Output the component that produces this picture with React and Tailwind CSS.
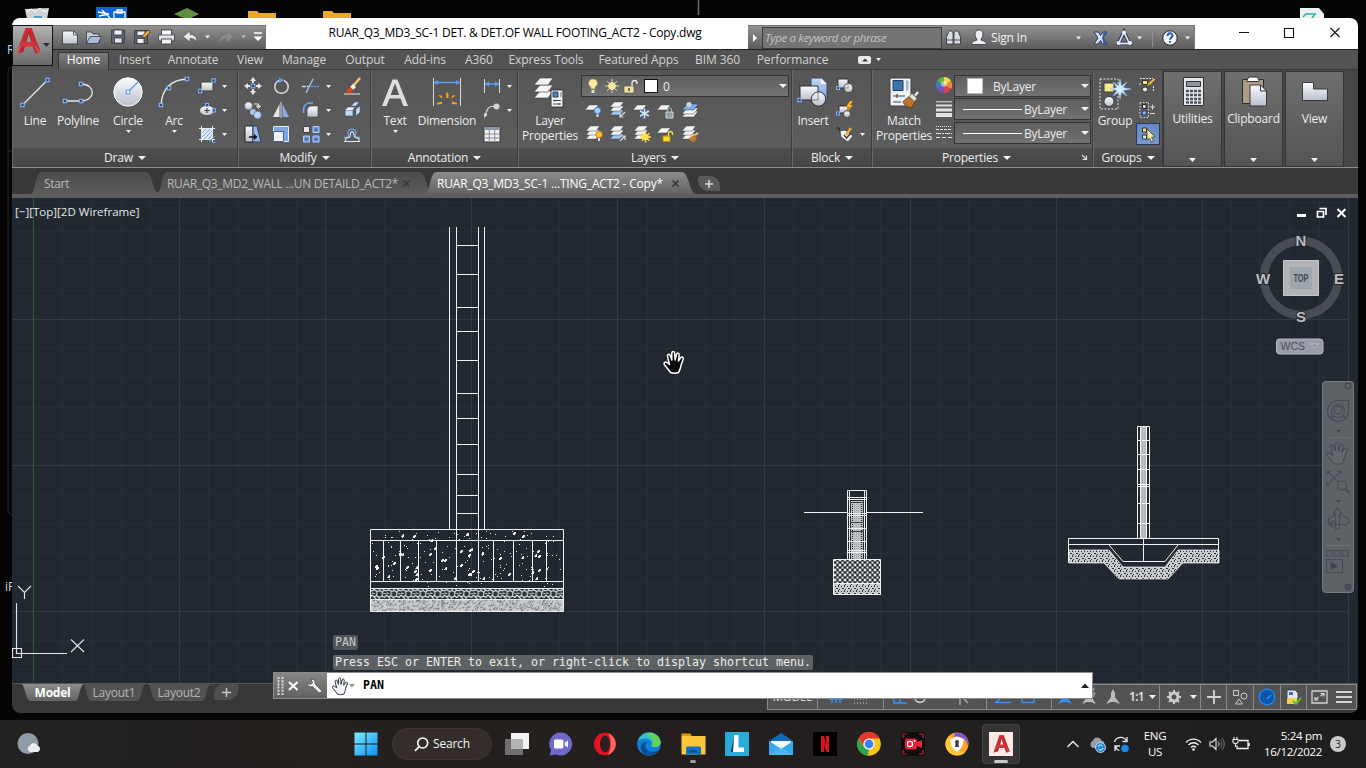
import React from "react";

const UI = "font-['Open_Sans','Noto_Sans',sans-serif]";

/* ---------- drawing helpers ---------- */
const Svg = ({ w = 18, h = w, vb, className = "", children }) => (
  <svg width={w} height={h} viewBox={vb || `0 0 ${w} ${h}`} className={"block shrink-0 " + className} fill="none">
    {children}
  </svg>
);
const Grip = ({ x, y, s = 3.4 }) => (
  <rect x={x - s / 2} y={y - s / 2} width={s} height={s} fill="#3c4454" stroke="#7fb4ff" strokeWidth="1.1" />
);
const Caret = ({ w = 5, className = "" }) => (
  <svg width={w} height={Math.ceil(w / 2)} viewBox="0 0 10 5" preserveAspectRatio="none" className={"block shrink-0 " + className}>
    <path d="M0 0h10L5 5z" fill="#f2f2f2" />
  </svg>
);
const Defs = () => (
  <svg width="0" height="0" className="absolute">
    <defs>
      <linearGradient id="metal" x1="0" y1="0" x2="0" y2="1">
        <stop offset="0" stopColor="#fbfbfd" />
        <stop offset="1" stopColor="#b9bfcb" />
      </linearGradient>
      <linearGradient id="sky" x1="0" y1="0" x2="0" y2="1">
        <stop offset="0" stopColor="#c3d9f2" />
        <stop offset="1" stopColor="#6d9bd8" />
      </linearGradient>
      <linearGradient id="red" x1="0" y1="0" x2="1" y2="1">
        <stop offset="0" stopColor="#e5434a" />
        <stop offset="1" stopColor="#98161f" />
      </linearGradient>
      <linearGradient id="tabOn" x1="0" y1="0" x2="0" y2="1">
        <stop offset="0" stopColor="#8d8d8d" />
        <stop offset="1" stopColor="#626262" />
      </linearGradient>
      <linearGradient id="tabOff" x1="0" y1="0" x2="0" y2="1">
        <stop offset="0" stopColor="#4a4a4a" />
        <stop offset="1" stopColor="#5c5c5c" />
      </linearGradient>
      <linearGradient id="win" gradientUnits="userSpaceOnUse" x1="0" y1="0" x2="24" y2="24">
        <stop offset="0" stopColor="#7df0ff" />
        <stop offset="1" stopColor="#0a8cf5" />
      </linearGradient>
    </defs>
  </svg>
);

/* ---------- large icons ---------- */
const LineBig = () => (
  <Svg w={32}><path d="M3.5 29L28.5 4" stroke="#e6e6e6" strokeWidth="1.3" /><Grip x={3.5} y={29} /><Grip x={28.5} y={4} /></Svg>
);
const PolyBig = () => (
  <Svg w={32}><path d="M3 25H19C34 25 34 8 19 8" stroke="#e6e6e6" strokeWidth="1.3" /><Grip x={3} y={25} /><Grip x={19} y={25} /><Grip x={19} y={8} /></Svg>
);
const CircleBig = () => (
  <Svg w={32}><circle cx="16" cy="16" r="14.2" fill="url(#metal)" stroke="#fff" /><path d="M16 16L26 6" stroke="#5b94e6" strokeWidth="1.2" />
    <rect x="14.2" y="14.2" width="3.6" height="3.6" fill="#fff" stroke="#5b94e6" /></Svg>
);
const ArcBig = () => (
  <Svg w={32}><path d="M3 29C4 14 12 4 29 3" stroke="#e6e6e6" strokeWidth="1.3" /><Grip x={3} y={29} /><Grip x={11} y={12} /><Grip x={29} y={3} /></Svg>
);
const TextBig = () => (
  <Svg w={32}><path d="M3 30L13.6 3.5h4.8L29 30h-4.6l-2.9-7.6H10.4L7.5 30zM11.7 19h8.5L16 7.2z" fill="#dedede" fillRule="evenodd" /></Svg>
);
const DimBig = () => (
  <Svg w={32}><path d="M2.5 2v28M29.500 2v28" stroke="#d8d8d8" /><path d="M3 6.500h26" stroke="#5b9cf5" strokeWidth="1.4" />
    <path d="M3 6.500l4-2.500v5zM29 6.500l-4-2.500v5z" fill="#5b9cf5" />
    <g fill="#f5a21c"><path d="M15 18l1-2 1.500 2v4h-2zM9 21l-1.500-2 3 .5 1.500 3zM23 21l1.500-2-3 .5-1.500 3zM6 27l5-1.500v2.500l-5 .5zM26 27l-5-1.500v2.500l5 .5z" /></g></Svg>
);
const Sheet = ({ x = 0, y = 0, s = 1, f = "#f4f4f6" }) => (
  <path transform={`translate(${x} ${y}) scale(${s})`} d="M6 0h13l-5 7H0z" fill={f} stroke="#3c3c3c" strokeWidth=".6" />
);
const LayerBig = () => (
  <Svg w={34} h={34}><Sheet x={1} y={15} /><Sheet x={1} y={9} /><Sheet x={1} y={2} />
    <path d="M18 14h12v17H18z" fill="#f2f4f7" stroke="#3c3c3c" /><path d="M20 16h5v5h-5z" fill="#4f82c2" stroke="#28415f" /><path d="M27 16h2v5h-2z" fill="#a9b2bf" /><path d="M20 24.500h8M20 28h8M22 23.500v2M26 27v2" stroke="#444b55" /></Svg>
);
const InsertBig = () => (
  <Svg w={34} h={32}><path d="M15 2h10l6 6v18H15z" fill="url(#sky)" stroke="#3e4450" /><path d="M25 2l6 6h-6z" fill="#fff" />
    <path d="M4 10h18v14H4z" fill="url(#metal)" stroke="#2e3138" /><circle cx="22.500" cy="23" r="7.200" fill="url(#metal)" stroke="#2e3138" /><path d="M22 16v8h-6.500" stroke="#666" strokeWidth=".8" /><Grip x={3.500} y={24} /></Svg>
);
const Brush = ({ t }) => (
  <g transform={t}><path d="M0 8l6-5 6 5-3 6c-4 0-8-2-9-6z" fill="#b8742a" stroke="#5c3208" strokeWidth=".7" /><path d="M6 3l3-3 5 5-2.500 3z" fill="#e8e2d8" stroke="#5c5040" strokeWidth=".6" /><path d="M12 2l3-3.500" stroke="#eceff2" strokeWidth="2.400" /></g>
);
const MatchBig = () => (
  <Svg w={34} h={32}><path d="M3 2h21v28H3z" fill="#eff1f5" stroke="#3b3f47" /><path d="M6 4.500h10v10H6z" fill="#3c74ad" stroke="#1d3c60" /><path d="M19 4.500h2.500v10H19z" fill="#a9b2bf" /><path d="M6 20h12M10 18v4M6 26h8" stroke="#454c57" strokeWidth="1.200" /><Brush t="translate(16 17.500)" /></Svg>
);
const GroupBig = () => (
  <Svg w={34} h={34}><path d="M2 3h18v30H2z" stroke="#e8e8e8" strokeDasharray="2 1.500" /><path d="M6 7h10v9H6z" fill="#f5e98b" stroke="#3a3a3a" /><circle cx="11" cy="25.500" r="5" fill="url(#metal)" stroke="#3a3a3a" />
    <path d="M22 3l1.400 7 5.600-4-4 5.500 8 1.500-8 1.500 4 5.500-5.600-4-1.400 7-1.400-7-5.600 4 4-5.500-7-1.500 7-1.500-4-5.500 5.600 4z" fill="#d8edff" stroke="#8cc0f4" strokeWidth=".6" /></Svg>
);
const CalcBig = () => (
  <Svg w={32}><path d="M6.500 2.500h20v28h-20z" fill="#e4e6ea" stroke="#2e3138" /><path d="M9.500 6.500h14v5h-14z" fill="#8f959d" stroke="#30343a" />
    {[15, 19, 23, 26.500].map((y) => <path key={y} d={`M9 ${y + 1}h15`} stroke="#4e545e" strokeWidth="2.400" strokeDasharray="3 1" />)}</Svg>
);
const ClipBig = () => (
  <Svg w={32}><path d="M4.500 4.500h21v24h-21z" fill="#ae9c8a" stroke="#2e2c29" /><path d="M9 5l2-3h8l2 3v1.500H9z" fill="#fff" stroke="#333" /><path d="M12 10h10.500l6 6v15H12z" fill="url(#metal)" stroke="#34363b" /><path d="M22.500 10v6h6z" fill="#fff" stroke="#34363b" /></Svg>
);
const ViewBig = () => (
  <Svg w={32}><path d="M3.500 7.500h11v6.500h14v11.500h-25z" fill="url(#metal)" stroke="#3a3a3a" /></Svg>
);

/* ---------- small 18px icons ---------- */
const I = {
  rect: () => <Svg><path d="M3 5h12v9H3z" fill="url(#metal)" stroke="#3a3a3a" /><Grip x={2} y={14} /><Grip x={15.500} y={3.500} /></Svg>,
  ellipse: () => <Svg><ellipse cx="9" cy="9.500" rx="7.500" ry="5.200" fill="url(#metal)" stroke="#4a4a4a" /><path d="M6.500 9.500h5M9 7v5" stroke="#333" /><Grip x={9} y={4} s={3} /><Grip x={16} y={9.500} s={3} /></Svg>,
  hatch: () => <Svg><path d="M4 4h10v10H4z" fill="#dce8fa" /><path d="M4 12l8-8M4 8l4-4M6 14l8-8M10 14l4-4" stroke="#7d9fd8" strokeWidth=".9" /><path d="M1 3.500h16M1 14.500h16M3.500 1v16M14.500 1v16" stroke="#e6e6e6" /><path d="M11 17l6-6M14 17.500h4" stroke="#5b9cf5" /></Svg>,
  move: () => <Svg><path d="M9 0l3 4H6zM9 18l3-4H6zM0 9l4-3v6zM18 9l-4-3v6z" fill="#e4e4e8" /><path d="M9 3v3M9 12v3M3 9h3M12 9h3" stroke="#e4e4e8" strokeWidth="2" /><Grip x={9} y={9} s={3.600} /></Svg>,
  rotate: () => <Svg><path d="M12 3.500a6.700 6.700 0 1 1-5 0" stroke="#d4d4d4" strokeWidth="1.700" /><path d="M7 .5l5.500 2.700L7 6z" fill="#5b9cf5" /></Svg>,
  trim: () => <Svg><path d="M0 9.500h7" stroke="#d8d8d8" strokeWidth="1.400" strokeDasharray="4 1" /><path d="M9 9.500h9" stroke="#5b9cf5" strokeWidth="1.400" strokeDasharray="2 1" /><path d="M4 16L11 2" stroke="#9cc4ff" strokeWidth="1.400" /></Svg>,
  erase: () => <Svg><path d="M1 17h16" stroke="#eee" /><path d="M17 1L10 9" stroke="#f3c76a" strokeWidth="2.600" /><path d="M10 7l3 3-3 3-3-3z" fill="#efefef" /><path d="M7 9.500l3.500 3.500-3 3c-2 1-4 0-4-2z" fill="#d2491f" /></Svg>,
  copy: () => <Svg><circle cx="4.500" cy="5" r="4" fill="url(#metal)" stroke="#444" strokeWidth=".5" /><circle cx="9" cy="11" r="3" fill="#a9c4e9" /><circle cx="13.500" cy="14" r="3.800" fill="#b8d2f2" stroke="#4a6da8" strokeWidth=".6" /><path d="M10 3h4.500v3M12.500 5h4l-2 2.500z" stroke="#eee" strokeWidth="1" /></Svg>,
  mirror: () => <Svg><path d="M7.500 3v13H1z" fill="#e6e6ea" /><path d="M10.500 3v13H17z" fill="#83aee6" /><path d="M9 1v16" stroke="#ddd" /></Svg>,
  fillet: () => <Svg><path d="M5 16V10c0-3 2-5 5-5h6v11z" fill="url(#metal)" stroke="#3a3a3a" strokeWidth=".6" /><path d="M1.500 12V9C1.500 4.500 4.500 2 8 2h3" stroke="#69a6fa" strokeWidth="1.600" /></Svg>,
  explode: () => <Svg><path d="M2 9h8v6H2z" fill="#c2d6f0" stroke="#3a5482" strokeWidth=".7" /><path d="M2 9l3-3h7l-2 3" fill="#e8eff8" stroke="#4a628c" strokeWidth=".6" /><path d="M8 5l4-4h4l-3 4zM13 8l4-3v6l-4 4z" fill="#cfdff4" stroke="#4a628c" strokeWidth=".6" /></Svg>,
  stretch: () => <Svg><path d="M1 1h8v16H1z" fill="url(#metal)" stroke="#222" /><path d="M9 1h4l4 16H9z" fill="#8fb7e8" stroke="#2c436c" /><path d="M5 12h6" stroke="#111" strokeWidth="1.600" /><path d="M10 9l3.500 3L10 15z" fill="#111" /></Svg>,
  scale: () => <Svg><path d="M1.500 1.500h15v15h-15z" fill="#7da6e0" stroke="#dce9fb" /><path d="M1.500 6.500h10v10h-10z" fill="#eef2f8" stroke="#4a6288" /></Svg>,
  array: () => <Svg><path d="M1.500 1.500h6v6h-6z" fill="#e8e8e8" stroke="#444" /><path d="M11 1.500h6v6h-6zM1.500 11h6v6h-6zM11 11h6v6h-6z" fill="#6e9ce0" stroke="#a8cbff" /><path d="M12.500 3.500h3v2.500h-3zM3 13h3v2.500H3zM12.500 13h3v2.500h-3z" fill="#4a6ca8" /></Svg>,
  offset: () => <Svg><path d="M1 12.500h3c1.500 0 2-1.500 1.500-2.500a4 4 0 1 1 7 0c-.5 1 0 2.500 1.500 2.500h3" stroke="#6ea6f7" strokeWidth="1.300" /><path d="M1 16.500h16M3 16c-1.500-2 0-3.500 3-3.500 2-1 1-3 1.500-4.500.8-1.500 2.500-1.500 3.200 0 .5 1.500-.5 3.500 2 4.500 3 .5 4 1.500 3 3.500" stroke="#e4e4e4" strokeWidth="1.100" /></Svg>,
  dimlin: () => <Svg><path d="M1.500 2v14M16.500 2v14" stroke="#ddd" /><path d="M2 7h14" stroke="#5b9cf5" strokeWidth="1.300" /><path d="M2 7l4-2.800v5.600zM16 7l-4-2.800v5.600z" fill="#5b9cf5" /></Svg>,
  leader: () => <Svg><path d="M2 15C4 9 5 6 8 5.500h3" stroke="#ddd" strokeWidth="1.200" /><path d="M1 17l.5-5 3 1.500z" fill="#eee" /><circle cx="13.500" cy="5.500" r="3" fill="#cfd3da" /></Svg>,
  table: () => <Svg><path d="M1 2h16v15H1z" fill="#f0f0f2" stroke="#3d3d3d" /><path d="M1 2h16v3H1z" fill="#8b95a8" /><path d="M1 9h16M1 13h16M6.300 5v12M11.700 5v12" stroke="#8c8c92" /></Svg>,
};
const MiniSheets = ({ n = 3, f }) => <>{[...Array(n)].map((_, i) => <Sheet key={i} x={1} y={(n - 1 - i) * 4 + 1} s={0.72} f={i === 0 && f ? f : "#f4f4f6"} />)}</>;
const LIcons = [
  () => <Svg><Sheet x={0} y={4} s={0.7} /><circle cx="12.500" cy="9.500" r="3.200" fill="#a9d0fb" stroke="#4a7fc4" /><path d="M12.500 13v3" stroke="#ddd" strokeWidth="2" /></Svg>,
  () => <Svg><MiniSheets f="#9fc4f0" /><path d="M16 11l-5 5M11 12.500V16h3.500" stroke="#ddd" strokeWidth="1.200" /></Svg>,
  () => <Svg><Sheet x={0} y={4} s={0.7} /><path d="M11.500 7.500v10M7 10l9 5M7 15l9-5" stroke="#3d62a0" strokeWidth="3" /><path d="M11.500 7.500v10M7 10l9 5M7 15l9-5" stroke="#d4e6fb" strokeWidth="1.600" /></Svg>,
  () => <Svg><Sheet x={0} y={4} s={0.7} /><path d="M9 11h7v6H9z" fill="#8aa0a0" stroke="#c9d6d6" /><path d="M10.500 11V9a2 2 0 0 1 4 0v2" stroke="#9ab0b0" strokeWidth="1.200" /></Svg>,
  () => <Svg><Sheet x={1} y={10} s={0.85} /><Sheet x={1} y={7} s={0.85} /><Sheet x={1} y={3} s={0.85} f="#7eaeea" /><circle cx="8" cy="3.500" r="2.500" fill="#cdd3dc" /></Svg>,
  () => <Svg><MiniSheets /><circle cx="14" cy="9.500" r="3.200" fill="#ffc23d" stroke="#e07a10" /><path d="M14 13v3" stroke="#ddd" strokeWidth="2" /></Svg>,
  () => <Svg><MiniSheets f="#9fc4f0" /><path d="M11 16l5-5M12 11h4v4" stroke="#ddd" strokeWidth="1.200" /></Svg>,
  () => <Svg><MiniSheets /><path d="M12.500 6.500v11M7 12h11M8.700 8.200l7.600 7.600M16.300 8.200l-7.600 7.600" stroke="#ffe14a" strokeWidth="1.300" /><circle cx="12.500" cy="12" r="3.200" fill="#ffe04a" /></Svg>,
  () => <Svg><Sheet x={0} y={3} s={0.7} /><path d="M6 11h7v5.500H6z" fill="#ffd93a" stroke="#b48a10" /><path d="M11.500 11V8.500a2 2 0 0 1 4 0V10" stroke="#ffd93a" strokeWidth="1.300" /></Svg>,
  () => <Svg><MiniSheets /><path d="M8 13l5-3 3 3-3 4c-2 0-4-1-5-4z" fill="#c7792c" /><path d="M14 10l3-2" stroke="#eed9b8" strokeWidth="1.600" /></Svg>,
];
const BIcons = [
  () => <Svg><path d="M2 2h10v9H2z" fill="url(#metal)" stroke="#333" /><circle cx="12.500" cy="11" r="4.500" fill="url(#metal)" stroke="#444" /><path d="M12 6v5H8" stroke="#888" strokeWidth=".8" /><Grip x={2} y={11} s={3} /></Svg>,
  () => <Svg><path d="M3 5h9v7H3z" fill="url(#metal)" stroke="#333" /><circle cx="11" cy="13" r="3.500" fill="url(#metal)" stroke="#444" /><Grip x={2} y={12.500} s={3} /><path d="M14 0l-4 6h3l-2 5 6-7h-3l3-4z" fill="#ffc72e" stroke="#c36d08" strokeWidth=".5" /></Svg>,
  () => <Svg><path d="M0 3h3l1 3" stroke="#222" /><path d="M4 6l5-1 8 6-5 6-7-5z" fill="#f4f4f6" stroke="#333" strokeWidth=".7" /><path d="M8 10l2.500 3L15 8" stroke="#333" strokeWidth="1.300" /><path d="M10 10l5-7" stroke="#f0a52c" strokeWidth="2.400" /></Svg>,
];
const ColorWheel = () => (
  <Svg w={16}><path d="M8 8L8 0A8 8 0 0 1 15 4z" fill="#f3d84e" /><path d="M8 8L15 4A8 8 0 0 1 15 12z" fill="#ef8a3a" /><path d="M8 8L15 12A8 8 0 0 1 8 16z" fill="#d8434f" /><path d="M8 8V16A8 8 0 0 1 1 12z" fill="#7b4fb8" /><path d="M8 8L1 12A8 8 0 0 1 1 4z" fill="#3f78cc" /><path d="M8 8L1 4A8 8 0 0 1 8 0z" fill="#5fae4c" /><circle cx="8" cy="7" r="3" fill="#fff" opacity=".45" /></Svg>
);
const LwIcon = () => <Svg w={16}><path d="M0 .8h16" stroke="#e2e2e2" /><path d="M0 4.500h16" stroke="#e2e2e2" strokeWidth="2" /><path d="M0 9h16" stroke="#e2e2e2" strokeWidth="3" /><path d="M0 14h16" stroke="#e2e2e2" strokeWidth="4" /></Svg>;
const LtIcon = () => <Svg w={16}><path d="M0 1.500h16" stroke="#e2e2e2" strokeDasharray="1 1" /><path d="M0 4.500h16" stroke="#e2e2e2" strokeDasharray="3 1" /><path d="M0 8.500h16" stroke="#e2e2e2" strokeDasharray="5 1 2 1" /><path d="M0 12.500h16" stroke="#e2e2e2" strokeDasharray="4 2" /></Svg>;
const GIcons = [
  () => <Svg><path d="M1 1.500h13M1 6v2M14.500 9v5" stroke="#ddd" strokeDasharray="2 1" /><path d="M3.500 3.500h5v4h-5z" fill="#f5e98b" stroke="#333" /><circle cx="6" cy="12.500" r="2.600" fill="#e8e8ec" stroke="#333" /><path d="M8 9l1-2.500L15 1l1.500 1.500L11 8z" fill="#f2c14a" stroke="#6e4a10" strokeWidth=".6" /></Svg>,
  () => <Svg><path d="M1 1.500h8.500v15H1z" stroke="#ddd" strokeDasharray="1.500 1.500" /><path d="M3.500 3.500h3.500v4H3.500z" fill="#dfe2e6" stroke="#222" /><circle cx="5.300" cy="12" r="2" fill="#8fc0ff" stroke="#2a4c88" /><path d="M11 6h5M13.500 3.500v5M11 12.500h5" stroke="#ddd" /></Svg>,
  () => <Svg><path d="M1 1.500h8.500v15H1z" stroke="#4f9bff" strokeDasharray="1.500 1.500" /><path d="M3.500 3h4v4h-4z" fill="#f2e78a" stroke="#333" /><path d="M3.500 10h4v4h-4z" fill="#dfe6f0" stroke="#333" /><path d="M8 4v11l2.500-2 2 4 2-1-2-4h3.500z" fill="#f8efa2" stroke="#333" strokeWidth=".7" /></Svg>,
];

/* ---------- ribbon ---------- */
const LBL = "text-[12px] leading-[15px] text-[#ededed] whitespace-nowrap text-center tracking-[-0.2px]";
const Big = ({ w, icon, label, arrow, two }) => (
  <div className={"flex shrink-0 flex-col items-center pt-[6px] " + w}>
    <div className="flex h-8 items-start justify-center">{icon}</div>
    <div className={LBL + " mt-[5px]"}>{label}{two && <><br />{two}</>}</div>
    {arrow && <Caret className="mt-[2px]" />}
  </div>
);
const Small = ({ icon: Ico, arrow, w = "w-[18px]" }) => (
  <div className="flex h-6 items-center">
    <div className={"flex justify-center " + w}><Ico /></div>
    {arrow && <Caret className="ml-[6px]" />}
  </div>
);
const Panel = ({ w, title, children, corner, shift = "" }) => (
  <section className={"flex shrink-0 flex-col border-r border-[#3e3e3e] bg-gradient-to-b from-[#565656] to-[#5e5e5e] " + w}>
    <div className="flex h-[78px] border-l border-[#686868]">{children}</div>
    <div className={"relative flex h-[19px] items-center justify-center gap-[5px] border-l border-[#686868] bg-gradient-to-b from-[#4f4f4f] to-[#454545] " + shift}>
      <span className={LBL}>{title}</span>
      <Caret w={8} />
      {corner && <Svg w={7} className="absolute right-1"><path d="M1 1l4 4M5.500 1.500v4h-4" stroke="#ddd" strokeWidth="1.200" /></Svg>}
    </div>
  </section>
);
const Combo = ({ children, className = "" }) => (
  <div className={"flex h-[22px] items-center border border-[#333] bg-gradient-to-b from-[#5f5f5f] to-[#727272] " + className}>
    {children}
    <Caret w={8} className="ml-auto mr-px" />
  </div>
);
const Collapsed = ({ icon, label }) => (
  <div className="mr-[2px] flex w-[59px] shrink-0 flex-col items-center border border-[#353535] bg-gradient-to-b from-[#6f6f6f] to-[#545454] pt-[3px]">
    {icon}
    <div className={LBL + " mt-[4px]"}>{label}</div>
    <Caret w={7} className="mt-auto mb-[4px]" />
  </div>
);
const Ribbon = () => (
  <div className="flex h-[98px] border-b border-[#8e8e8e] bg-[#474747]">
    <Panel w="w-[226px]" title="Draw">
      <Big w="w-[44px]" icon={<LineBig />} label="Line" />
      <Big w="w-[42px]" icon={<PolyBig />} label="Polyline" />
      <Big w="w-[58px]" icon={<CircleBig />} label="Circle" arrow />
      <Big w="w-[34px]" icon={<ArcBig />} label="Arc" arrow />
      <div className="ml-[7px] flex flex-col pt-1"><Small icon={I.rect} arrow /><Small icon={I.ellipse} arrow /><Small icon={I.hatch} arrow /></div>
    </Panel>
    <Panel w="w-[133px]" title="Modify">
      <div className="ml-[5px] flex flex-col pt-1"><Small icon={I.move} /><Small icon={I.copy} /><Small icon={I.stretch} /></div>
      <div className="ml-[10px] flex flex-col pt-1"><Small icon={I.rotate} /><Small icon={I.mirror} /><Small icon={I.scale} /></div>
      <div className="ml-[12px] flex flex-col pt-1"><Small icon={I.trim} arrow /><Small icon={I.fillet} arrow /><Small icon={I.array} arrow /></div>
      <div className="ml-[12px] flex flex-col pt-1"><Small icon={I.erase} /><Small icon={I.explode} /><Small icon={I.offset} /></div>
    </Panel>
    <Panel w="w-[147px]" title="Annotation">
      <Big w="w-[46px]" icon={<TextBig />} label="Text" arrow />
      <Big w="w-[58px]" icon={<DimBig />} label="Dimension" />
      <div className="ml-[7px] flex flex-col pt-1"><Small icon={I.dimlin} arrow /><Small icon={I.leader} arrow /><Small icon={I.table} /></div>
    </Panel>
    <Panel w="w-[274px]" title="Layers">
      <Big w="w-[62px]" icon={<LayerBig />} label="Layer" two="Properties" />
      <div className="flex flex-col pt-[5px]">
        <Combo className="w-[208px]">
          <Svg w={56} h={18} className="ml-[4px]">
            <path d="M7 2c3 0 4.500 2 4.500 4.500S9 9 9 12H5c0-3-2.500-3-2.500-5.500S4 2 7 2z" fill="#f9e8a6" stroke="#9c8434" strokeWidth=".6" /><path d="M5.500 13h3v3h-3z" fill="#ddd" />
            <path d="M26 2v14M19 9h14M21 4l10 10M31 4L21 14" stroke="#e6d9a0" /><circle cx="26" cy="9" r="3.800" fill="#f9e8a6" />
            <path d="M38 9h10v7H38z" fill="#f3e2a0" stroke="#554" strokeWidth=".7" /><path d="M43 11v3" stroke="#333" strokeWidth="1.300" /><path d="M46 9V6a2.500 2.500 0 0 1 5 0v1" stroke="#eee" strokeWidth="1.400" />
          </Svg>
          <div className="ml-[2px] h-[14px] w-[14px] border border-[#111] bg-white" />
          <span className={LBL + " ml-[5px]"}>0</span>
        </Combo>
        <div className="ml-[4px] mt-[4px] grid grid-cols-[repeat(5,24px)] gap-y-[6px]">
          {LIcons.map((L, i) => <L key={i} />)}
        </div>
      </div>
    </Panel>
    <Panel w="w-[80px]" title="Block">
      <Big w="w-[40px]" icon={<InsertBig />} label="Insert" />
      <div className="ml-[3px] flex flex-col pt-1"><Small icon={BIcons[0]} /><Small icon={BIcons[1]} /><Small icon={BIcons[2]} arrow /></div>
    </Panel>
    <Panel w="w-[221px]" title="Properties" corner shift="pr-3">
      <Big w="w-[62px]" icon={<MatchBig />} label="Match" two="Properties" />
      <div className="ml-px flex w-4 flex-col gap-[8px] pt-[7px]"><ColorWheel /><LwIcon /><LtIcon /></div>
      <div className="ml-[2px] flex flex-col pt-[5px]">
        <Combo className="w-[137px]"><div className="ml-[12px] h-4 w-4 border border-[#bbb] bg-white" /><span className={LBL + " ml-[10px]"}>ByLayer</span></Combo>
        <Combo className="mt-px w-[137px]"><div className="ml-[8px] h-px w-[59px] bg-white" /><span className={LBL + " ml-[2px]"}>ByLayer</span></Combo>
        <Combo className="mt-[2px] w-[137px]"><div className="ml-[8px] h-px w-[59px] bg-white" /><span className={LBL + " ml-[2px]"}>ByLayer</span></Combo>
      </div>
    </Panel>
    <Panel w="w-[70px]" title="Groups">
      <Big w="w-[42px]" icon={<GroupBig />} label="Group" />
      <div className="flex flex-col pt-1">
        <Small icon={GIcons[0]} w="w-6" /><Small icon={GIcons[1]} w="w-6" />
        <div className="mt-px flex h-[22px] w-6 items-center justify-center border border-[#28395a] bg-gradient-to-b from-[#6586c0] to-[#7d98c8]">{GIcons[2]()}</div>
      </div>
    </Panel>
    <div className="flex pt-px">
      <Collapsed icon={<CalcBig />} label="Utilities" />
      <Collapsed icon={<ClipBig />} label="Clipboard" />
      <Collapsed icon={<ViewBig />} label="View" />
    </div>
  </div>
);

/* ---------- title bar ---------- */
const RedA = ({ w, h }) => (
  <svg width={w} height={h} viewBox="0 0 24 27" className="block" fill="none">
    <path d="M9 1h6l8.500 23-5 1.500L12 6z" fill="#a51c26" /><path d="M9 1l4.500 2L7 24l-6.500 1.500z" fill="url(#red)" /><path d="M3.500 19l2-4.500 13-.5 2 5z" fill="#d4373f" /><path d="M11 1h4l8.500 23-4.500 1.500z" fill="#cf3038" opacity=".75" />
    <path d="M.8 25.500l3.700-7.500M22.500 24.500l-4-6" stroke="#e98a8e" opacity=".7" />
  </svg>
);
const TitleBar = () => (
  <header className="relative flex h-[31px] bg-white">
    <div className="mt-[7px] flex h-6 w-[254px] items-center border-t border-r border-[#777] bg-gradient-to-b from-[#919191] to-[#5c5c5c] pl-[50px]">
      <Svg w={204} h={20} className="-mt-[2px]">
        <g stroke="#33363c" strokeWidth=".8">
          <path d="M0.500 4h11l4 4v9h-15z" fill="url(#metal)" /><path d="M11.500 4v4h4z" fill="#fff" />
          <path d="M24.500 5h5l1.500 2h6v9H24.500z" fill="#c9d3e0" /><path d="M28 9.500h11.500L36 16.500H24.500z" fill="#a9bbd4" />
          <path d="M49.500 3h13v13h-13z" fill="#5d6673" /><path d="M52 3h8v5h-8z" fill="#eef0f4" /><path d="M52.500 11h7.500v5h-7.500z" fill="#e4e7ec" />
          <path d="M72.500 3.500h13v13h-13z" fill="#5d6673" /><path d="M75 4h8v4.500h-8zM75 11.500h7v5h-7z" fill="#eef0f4" /><path d="M80 11l1-3 5-5 2.500 2-5.500 5.500z" fill="#f2a637" />
          <path d="M99.500 3h10v6h-10z" fill="#fff" /><path d="M96.500 8h16v6h-16z" fill="url(#metal)" /><path d="M99.500 12h10v5h-10z" fill="#f2f2f4" />
        </g>
        <path d="M121 9.500L128 4v3.500c4 0 7 2 7 8-1.500-3-3-4-7-4V15z" fill="#e6e8ec" stroke="#4a4d52" strokeWidth=".6" />
        <path d="M143 8.500h5l-2.500 3z" fill="#eee" />
        <path d="M172 9.500L165 4v3.500c-4 0-7 2-7 8 1.500-3 3-4 7-4V15z" fill="#8b8b8b" stroke="#777" strokeWidth=".6" />
        <path d="M179 8.500h5l-2.500 3z" fill="#bbb" />
        <path d="M192 6h8" stroke="#fff" strokeWidth="1.300" /><path d="M191.500 9.500h9l-4.500 4.500z" fill="#fff" />
      </Svg>
    </div>
    <div className="flex w-[482px] items-start justify-center pt-[6px] pl-[16px]">
      <span className="text-[12px] leading-[18px] tracking-[-0.23px] whitespace-nowrap text-black">RUAR_Q3_MD3_SC-1 DET. &amp; DET.OF WALL FOOTING_ACT2 - Copy.dwg</span>
    </div>
    <div className="mt-[7px] flex h-6 w-[447px] items-center border-t border-r border-[#777] bg-gradient-to-b from-[#919191] to-[#5c5c5c]">
      <Svg w={14} h={20}><path d="M5 6v8l4-4z" fill="#fff" /></Svg>
      <div className="flex h-[22px] w-[180px] items-center border border-[#3c3c3c] bg-[#747474] pl-[2px]">
        <span className="text-[11.500px] italic tracking-[-0.38px] whitespace-nowrap text-[#c4c4c4]">Type a keyword or phrase</span>
      </div>
      <Svg w={48} h={20}>
        <g fill="#d9dce2" stroke="#2d3036" strokeWidth=".8"><path d="M7 3h3l1 2v11H4.500V9zM16 3h-3l-1 2v11h6.500V9z" /><path d="M4.500 12H11M12 12h6.500" /></g>
        <path d="M37 2c3 0 4 2 4 4.500S39 11 39 12c2 1 5 1 5.500 4.500h-15C30 13 33 13 35 12c0-1-2-3-2-5.500S34 2 37 2z" fill="#eceef2" stroke="#2d3036" strokeWidth=".8" />
      </Svg>
      <span className="ml-px text-[12px] tracking-[-0.2px] text-[#f2f2f2]">Sign In</span>
      <Svg w={142} h={20} className="ml-auto">
        <path d="M24 8.500h5l-2.500 3z" fill="#eee" />
        <path d="M42 4h4.500l2 3.500L51 4h4l-4 6 4 6h-4.500l-2-3.500L46 16h-4l4-6z" fill="#dfe4ee" stroke="#26345c" /><path d="M50 10l1.500-6H55l-4 6 4 6h-3.500z" fill="#3c5fb0" />
        <path d="M72 4l5.500 11.500h-11z" stroke="#26304a" strokeWidth="3.600" /><path d="M72 4l5.500 11.500h-11z" stroke="#d6dded" strokeWidth="1.800" /><circle cx="72" cy="4.500" r="2" fill="#eef" /><circle cx="66.500" cy="15" r="2" fill="#eef" /><circle cx="78" cy="15" r="2" fill="#eef" />
        <path d="M85 8.500h5l-2.500 3z" fill="#eee" />
        <path d="M100.500 1v18" stroke="#8f8f8f" />
        <circle cx="118" cy="10" r="7.200" fill="#f4f6fa" stroke="#222" />
        <path d="M115.500 8c0-3.500 5-3.500 5-.5 0 2-2.500 2-2.500 4.200M118 13v1.800" stroke="#2b57b8" strokeWidth="2" />
        <path d="M133 8.500h5l-2.500 3z" fill="#eee" />
      </Svg>
    </div>
    <div className="ml-[32px] mt-[1px] flex h-7 items-center">
      <Svg w={126} h={28}><g stroke="#111" strokeWidth="1.100"><path d="M12 13.500h10" /><path d="M57.500 9.500h9v9h-9z" /><path d="M103.500 9l9 9M112.500 9l-9 9" /></g></Svg>
    </div>
    <div className="absolute left-0 top-[7px] z-10 flex h-[41px] w-[41px] items-start border border-[#111] bg-gradient-to-b from-[#b3b3b3] to-[#6a6a6a] pl-[3px] pt-[1px]">
      <RedA w={25} h={28} />
      <Caret w={7} className="ml-[2px] mt-[16px] [&_path]:fill-[#2b2f36]" />
    </div>
  </header>
);
const MenuTabs = () => {
  const tabs = [["Insert", "w-[51px]"], ["Annotate", "w-[66px]"], ["View", "w-[48px]"], ["Manage", "w-[60px]"], ["Output", "w-[62px]"], ["Add-ins", "w-[58px]"], ["A360", "w-[50px]"], ["Express Tools", "w-[84px]"], ["Featured Apps", "w-[101px]"], ["BIM 360", "w-[57px]"], ["Performance", "w-[93px]"]];
  return (
    <nav className="flex h-[21px] items-end border-t border-[#222] bg-[#535353]">
      <div className="ml-[46px] flex h-[18px] w-[51px] items-center justify-center border border-b-0 border-[#333] bg-gradient-to-b from-[#7b7b7b] to-[#5b5b5b]">
        <span className="-mt-[3px] text-[12px] leading-[14px] tracking-[-0.1px] text-white">Home</span>
      </div>
      <div className="flex h-[20px] flex-1 items-center border-b border-[#3a3a3a]">
        {tabs.map(([t, w]) => <div key={t} className={"flex shrink-0 justify-center text-[12px] tracking-[-0.1px] whitespace-nowrap text-[#d2d2d2] " + w}>{t}</div>)}
        <div className="ml-[19px] flex h-2 w-[13px] items-center justify-center rounded-[2px] bg-[#e8e8ea]"><Svg w={6} h={4}><path d="M0 3.500h6L3 .5z" fill="#333" /></Svg></div>
        <Caret className="ml-[5px]" />
      </div>
    </nav>
  );
};

/* ---------- document tabs ---------- */
const DocTab = ({ w, on, label, close, cls = "" }) => (
  <div className={"relative flex h-[22px] shrink-0 items-center " + cls}>
    <svg width={w} height="22" viewBox={`0 0 ${w} 22`} className="absolute left-0 top-0">
      <path d={`M0 22C6 20 4 0 12 0H${w - 15}C${w - 6} 0 ${w - 8} 20 ${w} 22z`} fill={on ? "url(#tabOn)" : "url(#tabOff)"} stroke={on ? "none" : "#5e5e5e"} strokeWidth=".7" />
    </svg>
    <span className={"relative pt-px text-[12px] whitespace-nowrap " + (on ? "tracking-[-0.2px] text-white" : "tracking-[-0.32px] text-[#b9b9b9]")}>{label}</span>
    {close && <Svg w={7} className={"absolute top-[8px] " + close}><path d="M.5.5l6 6M6.500.5l-6 6" stroke="#3a3a3a" strokeWidth="1.700" /></Svg>}
  </div>
);
const DocTabs = () => (
  <div className="flex h-[30px] flex-col bg-[#383838]">
    <div className="flex h-[26px] items-end pl-[19px]">
      <DocTab w={128} label="Start" cls="w-[126px] pl-[13px]" />
      <DocTab w={276} label="RUAR_Q3_MD2_WALL ...UN DETAILD_ACT2*" close="right-[15px]" cls="w-[268px] pl-[10px]" />
      <DocTab w={271} on label="RUAR_Q3_MD3_SC-1 ...TING_ACT2 - Copy*" close="right-[19px]" cls="w-[273px] pl-[12px]" />
      <div className="mb-[3px] flex h-[15px] w-[22px] items-center justify-center rounded-tr-[10px] rounded-bl-[10px] rounded-tl-[3px] bg-[#5a5a5a]">
        <Svg w={8}><path d="M4 0v8M0 4h8" stroke="#d8d8d8" strokeWidth="1.600" /></Svg>
      </div>
    </div>
    <div className="h-1 bg-[#5d5d5d]" />
  </div>
);

/* ---------- model canvas (world units are screen pixels) ---------- */
const rng = (seed) => () => ((seed = (seed * 1103515245 + 12345) & 0x7fffffff) / 0x7fffffff);
const minor = [], major = [];
for (let i = 1; i < 46; i++) {
  const x = Math.round(33 + i * 29.22) + 0.5;
  (i % 5 === 0 ? major : minor).push(`M${x} 198V683`);
}
for (let i = -4; i < 13; i++) {
  const y = Math.round(319 + i * 29.2) + 0.5;
  (i % 5 === 0 ? major : minor).push(`M12 ${y}H1348`);
}
const r1 = rng(77);
let specks = "", chips = "";
for (let i = 0; i < 170; i++) {
  const x = Math.floor(372 + r1() * 190), y = Math.floor(531 + r1() * 56);
  specks += `M${x} ${y}h1v1h-1z`;
}
for (let i = 0; i < 44; i++) {
  const x = Math.floor(372 + r1() * 187), y = Math.floor(531 + r1() * 53);
  chips += i % 3 ? `M${x} ${y + 1}h1v-1h2v2h-1v1h-2z` : `M${x} ${y + 3}l2 -3h1v3z`;
}
let dark = "";
for (let i = 0; i < 480; i++) {
  const x = Math.floor(371 + r1() * 191), y = Math.floor(600 + r1() * 11);
  dark += `M${x} ${y + 1}l1.500 -1`;
}
const rungs = [245, 274, 307, 331, 360, 393, 418, 444, 474, 495, 513];
const studs = [383, 400, 418, 436, 493, 513, 532, 546];
const Hand = ({ fill = "#fff", stroke = "#111", t, sw = 1.2 }) => (
  <path transform={t} d="M7 22C5 19 3 17 .8 14-.2 12 2 11 3.500 12L6 14 4 6C3.600 3.600 6 3 6.700 5L8.300 9.500V3C8.300.3 11 .3 11.200 3L11.600 9.500 13 4C13.600 1.800 16 2.300 15.700 4.600L14.900 10.500 17 7.500C18.300 5.600 20.500 6.800 19.600 9L17.500 15C17 18.500 16 20 15 22Q11 23.500 7 22z" fill={fill} stroke={stroke} strokeWidth={sw} strokeLinejoin="round" />
);
const Canvas = () => (
  <div className="relative h-[485px] bg-[#212830]">
    <svg width="1346" height="485" viewBox="12 198 1346 485" className="block" fill="none">
      <defs>
        <pattern id="cross" width="5" height="5" patternUnits="userSpaceOnUse"><path d="M0 0l5 5M5 0L0 5" stroke="#f0f0f0" strokeWidth="1.100" strokeDasharray="2 .6" /></pattern>
        <pattern id="grav" width="6" height="5" patternUnits="userSpaceOnUse"><rect width="6" height="5" fill="#c9cbcd" /><path d="M1 1h1v1H1zM4 0h1v2h-1zM2 3h2v1H2zM5 4h1v1H5z" fill="#2a3038" /></pattern>
        <pattern id="stone" width="14.500" height="11" x="372" y="588" patternUnits="userSpaceOnUse">
          <rect width="14.500" height="11" fill="#26343a" /><path d="M5 3.500l3-1 2.500 2-.5 3.500-3 1.500-2.500-2zM5 3.500L2 1.500 0 3M4.500 7.500L2 9 0 7M10.500 4.500L12 2l2.500 1M10 8l2.500 1.500L14.500 7M12 2L10 0M12 5.500l2 .5M0 5l2.500.5M7 9.500V11M8 2.500L7 0M2 9l2 2" stroke="#e6eaea" strokeWidth="1.100" />
        </pattern>
        <pattern id="fine" width="2" height="2" patternUnits="userSpaceOnUse"><rect width="2" height="2" fill="#bfc1c3" /><path d="M0 0h1v1H0z" fill="#a4a7aa" /></pattern>
      </defs>
      <path d={minor.join("")} stroke="#262e38" />
      <path d={major.join("")} stroke="#303a4b" />
      <path d="M33.500 198V683" stroke="#2b5a34" />

      {/* wall elevation and footing */}
      <g stroke="#f1f3f3">
        <path d="M449.500 227V529M484.500 227V529M456.500 227V581M478.500 227V581" />
        {rungs.map((y) => <path key={y} d={`M456 ${y + 0.5}H479`} />)}
        <path d="M370.500 529.500h193v82h-193zM370 540.500h193M370 581.500h193M370 588.500h193M370 599.500h193" />
        {studs.map((x) => <path key={x} d={`M${x + 0.5} 540V581`} />)}
      </g>
      <path d={specks} fill="#dfe1e2" /><path d={chips} fill="#eef0f0" />
      <path d="M371 589h192v10H371z" fill="url(#stone)" />
      <path d="M371 600h192v11H371z" fill="#c8c9cc" /><path d={dark} stroke="#6a6f76" strokeWidth=".7" />

      {/* section through wall */}
      <path d="M851 501h12v58h-12z" fill="url(#fine)" />
      <path d="M852.500 500V559M861.500 500V559" stroke="#22282f" strokeDasharray="1 1" />
      <path d="M834 560h47v23h-47z" fill="url(#cross)" /><path d="M834 583h47v12h-47z" fill="url(#grav)" />
      <g stroke="#f1f3f3">
        <path d="M804 512.500h43M867 512.500h56M847.500 559V490.500h19V559M849.500 490V559M864.500 490V559" />
        <path d="M847 497.500h20M847 499.500h20M847 513.500h20M847 515.500h20M847 528.500h20M847 541.500h20M847 550.500h20M847 552.500h20" />
        <path d="M833.500 559.500h47v35h-47zM833 583.500h47" />
      </g>
      <path d="M850 522.500h14M850 531.500h14M850 502.500h14" stroke="#3b4149" />

      {/* strip footing section */}
      <path d="M1141 427h5v111h-5z" fill="url(#fine)" />
      <path d="M1069 550h40l14 17h42l13-17h41v13h-36l-15 16h-49l-15-16h-35z" fill="url(#grav)" stroke="#f1f3f3" strokeWidth=".7" />
      <g stroke="#f1f3f3">
        <path d="M1137.500 538V426.500h12V538M1140.500 427V538M1146.500 427V538" />
        <path d="M1137 440.500h13M1137 454.500h13M1137 469.500h13M1137 484.500h13M1137 486.500h13M1137 503.500h13M1137 523.500h13" />
        <path d="M1068.500 563V538.500h150V563M1068 544.500h151M1143.500 538V561M1109 545l14 16.500h42l13-16.500" />
      </g>

      {/* UCS icon */}
      <path d="M16.500 603V653.500H67M12.500 648.500h9v9h-9zM18 586l6.500 6.500 6.500-6.500M24.500 592.500V599M71 639.500l13 12.500M84 639.500L71 652" stroke="#e4e6e8" strokeWidth="1.100" />

      {/* view cube */}
      <circle cx="1301" cy="278" r="37" stroke="#474d53" strokeWidth="8.500" />
      <g className="font-['Liberation_Sans',sans-serif] text-[15px] font-bold" fill="#bcbec0" stroke="#212830" strokeWidth="2" paintOrder="stroke" textAnchor="middle">
        <text x="1301" y="245.500">N</text><text x="1301" y="322">S</text><text x="1263" y="283.500">W</text><text x="1339" y="283.500">E</text>
      </g>
      <path d="M1283.500 260.500h35v35h-35z" fill="#b2b3b5" stroke="#c6c7c8" /><path d="M1290 267h22v22h-22z" fill="#9ea6ad" />
      <text x="1301" y="282" textAnchor="middle" textLength="15" lengthAdjust="spacingAndGlyphs" className="font-['Liberation_Sans',sans-serif] text-[10.500px] font-bold" fill="#41474e">TOP</text>
      <rect x="1276.500" y="339" width="46.500" height="15" rx="3" fill="#9a9da8" stroke="#b7bac4" />
      <text x="1280.500" y="349.500" className="font-['Liberation_Sans',sans-serif] text-[10.500px]" fill="#4b5058">WCS</text>
      <path d="M1310.500 344h8l-4 4z" fill="#8d909b" stroke="#c7cad2" strokeWidth=".7" />

      {/* navigation bar */}
      <rect x="1322.500" y="381.500" width="31" height="211" rx="3" fill="#5d6266" stroke="#777b7e" />
      <g stroke="#454b52" strokeWidth="1.100">
        <circle cx="1348" cy="386" r="3" fill="#4a5056" /><path d="M1346.500 384.500l3 3M1349.500 384.500l-3 3" stroke="#777" />
        <path d="M1338 400.500h10.500V411a10.500 10.500 0 1 1-10.500-10.500z" /><circle cx="1338" cy="411" r="6.500" /><circle cx="1338" cy="410" r="4" /><path d="M1333.500 415.500l-3 3M1342.500 415.500l3 3" />
        <path d="M1327 471l14 14M1341 471l-14 14M1327 475v-4h4M1337 471h4v4M1327 481v4h4" /><circle cx="1342" cy="485.500" r="4.500" fill="#5d6266" /><path d="M1345.500 489l4 4" strokeWidth="2.400" />
        <path d="M1335.500 529V514h-2.500l4.500-6 4.500 6h-2.500v15zM1334 516c-7 2-8 6-3 8l14 1c6-2 5-7-3-9M1334 521l-5 3 4 3" />
        <path d="M1326.500 550.500h5.500v5.500h-5.500zM1334.500 550.500h5.500v5.500h-5.500zM1342.500 550.500h5.500v5.500h-5.500zM1326.500 559.500h16v13h-16z" /><path d="M1331 562.500v7l6-3.500z" fill="#3f454c" />
        <circle cx="1348" cy="587" r="3" fill="#4a5056" />
      </g>
      <path d="M1336 430h5l-2.500 3zM1336 500h5l-2.500 3zM1336 538h5l-2.500 3z" fill="#3f454c" />
      <path d="M1325 437.500h26M1325 545.500h26" stroke="#696e72" />
      <Hand t="translate(1326.500 441.500) scale(1.050 1)" fill="#63686d" stroke="#454b52" />

      {/* viewport controls */}
      <path d="M1297 214h9v3h-9z" fill="#fff" />
      <path d="M1319.500 208.500h6.500v6.500M1317.500 211.500h6v5.500h-6z" stroke="#fff" strokeWidth="1.700" />
      <path d="M1337.500 209l8 8M1345.500 209l-8 8" stroke="#fff" strokeWidth="2" />

      {/* pan cursor */}
      <Hand t="translate(663.500 350.500)" fill="#0a0a0a" stroke="#fff" sw={1.500} />
    </svg>
    <span className="absolute left-[3px] top-[6px] text-[11.500px] leading-4 tracking-[0.02px] whitespace-nowrap text-[#e6e8ea]">[−][Top][2D Wireframe]</span>
    <div className="absolute left-[321px] top-[437px] flex flex-col items-start gap-[5px] font-['DejaVu_Sans_Mono',monospace] text-[11.630px] leading-[15px] whitespace-nowrap">
      <span className="rounded-[2px] bg-[#50555a] px-[2px] text-[#c8cacc]">PAN</span>
      <span className="rounded-[2px] bg-[#5d6164] px-[2px] text-[#ececec]">Press ESC or ENTER to exit, or right-click to display shortcut menu.</span>
    </div>
  </div>
);

/* ---------- layout tabs, command line, status bar ---------- */
const LayoutTab = ({ w, on, children, bold }) => (
  <div className={"relative flex h-[17px] shrink-0 items-center justify-center " + w}>
    <svg width="100%" height="17" viewBox="0 0 64 17" preserveAspectRatio="none" className="absolute inset-0">
      <path d="M0 0h64c-5 1-4 17-9 17H10C4 17 5 1 0 0z" fill={on ? "url(#tabOn)" : "#525252"} />
    </svg>
    <span className={"relative text-[12px] tracking-[-0.25px] " + (bold ? "font-bold text-white" : "text-[#b5b5b5]")}>{children}</span>
  </div>
);
const Cell = ({ w, children }) => <div className={"flex shrink-0 items-center justify-center border-r border-[#8a8a8a] " + w}>{children}</div>;
const Person = ({ c }) => <path d="M10 2l2 4v4l5 7-5-2h-4l-5 2 5-7V6z" fill={c} />;
const BottomBar = () => (
  <div className="relative flex h-[30px] items-start border-t border-[#555] bg-[#383838]">
    <div className="flex pl-[9px]">
      <LayoutTab w="w-[63px]" on bold>Model</LayoutTab>
      <LayoutTab w="w-[64px] -ml-[2px]">Layout1</LayoutTab>
      <LayoutTab w="w-[64px] ml-[1px]">Layout2</LayoutTab>
      <div className="ml-[3px] flex h-4 w-[25px] items-center justify-center rounded-tr-[3px] rounded-br-[12px] rounded-tl-[10px] bg-[#4f4f4f]"><Svg w={9}><path d="M4.500 0v9M0 4.500h9" stroke="#c8c8c8" strokeWidth="1.500" /></Svg></div>
    </div>
    <div className="ml-auto mr-px flex h-[26px] w-[590px] border border-[#8a8a8a] bg-[#535353] text-[#e6e6e6]">
      <Cell w="w-[50px]"><span className="text-[11.500px] tracking-[-0.1px]">MODEL</span></Cell>
      <Cell w="w-[66px]"><Svg w={50} h={20}><path d="M3 8h14M3 12h14M6 5v11M10 5v11M14 5v11" stroke="#3b94ff" strokeWidth="1.300" /><path d="M28 8h14M28 12h14M28 16h14" stroke="#d8d8d8" strokeDasharray="1 2" /></Svg></Cell>
      <Cell w="w-[103px]"><Svg w={90} h={20}><path d="M4 4v12h13M4 11h6v5" stroke="#2f92ff" strokeWidth="1.600" /><circle cx="30" cy="10" r="5.500" stroke="#c8c8c8" strokeWidth="1.500" /><path d="M70 18V8l8 8" stroke="#aaa" strokeWidth="1.400" /></Svg></Cell>
      <Cell w="w-[65px]"><Svg w={54} h={20}><path d="M17 4L4 15.500h15" stroke="#2f92ff" strokeWidth="1.600" /><path d="M30 5h12v10.500H30z" stroke="#2f92ff" strokeWidth="1.600" /></Svg></Cell>
      <Cell w="w-[108px]">
        <Svg w={20}><Person c="#2f92ff" /></Svg><Svg w={20} className="ml-[4px]"><Person c="#bcbcbc" /><path d="M15 1l-2 5h3l-2 4" stroke="#bcbcbc" /></Svg><Svg w={20} className="ml-[4px]"><Person c="#bcbcbc" /></Svg>
        <span className="ml-[6px] text-[12px] font-semibold tracking-[-0.6px]">1:1</span><Caret w={7} className="ml-[5px]" />
      </Cell>
      <Cell w="w-[41px]"><Svg w={14}><circle cx="7" cy="7" r="4" stroke="#ccc" strokeWidth="3" /><path d="M7 0v3M7 11v3M0 7h3M11 7h3M2 2l2 2M10 10l2 2M12 2l-2 2M4 10l-2 2" stroke="#ccc" strokeWidth="2" /></Svg><Caret w={7} className="ml-[9px] -mr-[4px]" /></Cell>
      <Cell w="w-[26px]"><Svg w={14}><path d="M7 0v14M0 7h14" stroke="#d4d4d4" strokeWidth="1.800" /></Svg></Cell>
      <Cell w="w-[27px]"><Svg w={16}><path d="M1.500 1.500h5v5h-5zM7 10l3.500 5h-7z" stroke="#ccc" /><circle cx="12" cy="7" r="3" stroke="#ccc" /></Svg></Cell>
      <Cell w="w-[27px]"><Svg w={20}><circle cx="10" cy="10" r="7.800" fill="#0b56a8" stroke="#1f86f2" strokeWidth="1.500" /><path d="M10 12l4-4" stroke="#2f92ff" strokeWidth="1.500" /></Svg></Cell>
      <Cell w="w-[26px]"><Svg w={16}><path d="M1 1h8l3 3v6H1z" fill="#e4e8ee" stroke="#445" /><path d="M3 3h4v3H3z" fill="#3a6fae" /><path d="M1 9h10v6H1z" fill="#efd24a" /><path d="M7 12l3 3 5-6" stroke="#4fc02c" strokeWidth="2" /></Svg></Cell>
      <div className="flex flex-1 items-center justify-center gap-[8px]">
        <Svg w={17} h={14}><path d="M1 1h15v12H1z" stroke="#d4d4d4" strokeWidth="1.300" /><path d="M4 10l3.500-3M9.500 6L13 3.500M4 7v3h3.500M13 6.500v-3H9.500" stroke="#d4d4d4" strokeWidth="1.200" /></Svg>
        <Svg w={16} h={14}><path d="M0 2h16M0 7h16M0 12h16" stroke="#d4d4d4" strokeWidth="1.900" /></Svg>
      </div>
    </div>
    <div className="absolute -top-[12px] left-[261px] flex h-[27px] w-[820px] items-center border border-[#8a8a8a] bg-white">
      <div className="flex h-full w-[53px] items-center bg-gradient-to-b from-[#878787] to-[#616161]">
        <Svg w={53} h={24}>
          <path d="M4.500 3v18M8.500 3v18" stroke="#d8d8d8" strokeWidth="2" strokeDasharray="2 1.200" />
          <path d="M15 8l8.500 8M23.500 8L15 16" stroke="#fff" strokeWidth="2" />
          <path d="M37 5.500l1.500 3-2 2-3-1.500c0 3 2.500 4.500 5 3.500l6 6c2 1 4-1 2.500-2.500l-6-6c1-3-1-5-4-4.500z" fill="#f0f1f4" stroke="#444" strokeWidth=".7" />
        </Svg>
      </div>
      <Svg w={28} h={24} className="ml-[3px]"><Hand t="translate(2 3) scale(.78)" fill="#f4f4f4" stroke="#222c44" /><path d="M19 10h6l-3 3.500z" fill="#999" /></Svg>
      <span className="ml-[5px] font-['DejaVu_Sans_Mono',monospace] text-[11.630px] font-bold text-black">PAN</span>
      <Svg w={8} h={5} className="ml-auto mr-[3px]"><path d="M0 5h8L4 .5z" fill="#222" /></Svg>
    </div>
  </div>
);

/* ---------- desktop and taskbar ---------- */
const DesktopTop = () => (
  <div className="absolute inset-x-0 top-0">
    <svg width="1366" height="713" viewBox="0 0 1366 713" className="block" fill="none">
      <path d="M25 9l24-1-2 11H27z" fill="#cfd3d8" /><path d="M27 12l4-3 4 3 5-4 5 4 3-2" stroke="#fff" /><path d="M34 16h8v3h-8z" fill="#4e9fd0" />
      <path d="M96 7h31v12H96z" fill="#0d62dc" /><path d="M98 12l11 2-10 2M102 10l8 8M114 12h11v8h-11zM117 10h5v3h-5z" stroke="#fff" strokeWidth="1.300" />
      <path d="M174 14l13-6 12 6-12 6z" fill="#5f8f3e" /><path d="M174 14l13 6v-1" fill="#3b5a28" />
      <path d="M248 11h9l2 2h17v7h-28zM323 11h9l2 2h17v7h-28z" fill="#e9a82a" />
      <path d="M1300 8h19l5 6v6h-24z" fill="#eef1f1" /><path d="M1303 17l3-3h9l-3 4" stroke="#21b3a8" strokeWidth="1.500" />
      <path d="M698.500 0v15" stroke="#6d6d6d" strokeWidth="1.500" />
      <path d="M12 67.500q-4 0-4 5V512l4 3M8 151h4" stroke="#2c2c2e" />
    </svg>
    <span className="absolute left-[7px] top-[42px] text-[12px] leading-4 text-[#bcdce8]">R</span>
    <span className="absolute left-[5px] top-[579px] text-[12px] leading-4 text-[#d8dce0]">iP</span>
  </div>
);
const Slot = ({ children, run, on }) => (
  <div className={"relative flex h-12 w-11 shrink-0 items-center justify-center " + (run ? "after:absolute after:bottom-[5px] after:h-[3px] after:w-[6px] after:rounded-full after:bg-[#9c9c9c] " : "") + (on ? "after:absolute after:bottom-[5px] after:h-[3px] after:w-[14px] after:rounded-full after:bg-[#c9c9c9]" : "")}>
    {on && <div className="absolute inset-x-[3px] inset-y-[4px] rounded border border-[#444] bg-[#343434]" />}
    <div className="relative">{children}</div>
  </div>
);
const Taskbar = () => (
  <footer className="absolute inset-x-0 bottom-0 flex h-12 items-center bg-gradient-to-r from-[#232220] via-[#241f1e] to-[#1f1f20] text-white">
    <Svg w={26} h={24} className="ml-[17px]"><circle cx="11" cy="11.500" r="10.500" fill="#8f9ba6" /><path d="M13 20a3.500 3.500 0 0 1 0-6.500c1-3.500 6-3.500 7 0 4 .5 4 6.500 0 6.500z" fill="#eceef1" /></Svg>
    <Svg w={24} className="ml-[311px]"><path d="M0.500.5h11v11h-11zM12.500.5h11v11h-11zM.5 12.500h11v11h-11zM12.500 12.500h11v11h-11z" fill="url(#win)" /></Svg>
    <div className="ml-[14px] flex h-8 w-[100px] items-center rounded-full border border-[#3d3735] bg-[#342d2b] pl-[21px]">
      <Svg w={15}><circle cx="8.700" cy="6" r="5" stroke="#fff" strokeWidth="1.600" /><path d="M5 9.800L1 13.800" stroke="#fff" strokeWidth="1.800" /></Svg>
      <span className="ml-[4px] text-[12px] tracking-[-0.2px] text-[#f4f4f4]">Search</span>
    </div>
    <div className="ml-[3px] flex">
      <Slot><Svg w={24} h={22}><path d="M6 0h18v16H6z" fill="#f3f3f3" /><path d="M0 6h18v16H0z" fill="#6f6f6f" /><path d="M6 6h12v10H6z" fill="#b3b3b3" /></Svg></Slot>
      <Slot><Svg w={24}><path d="M12 .5A11.500 11.500 0 1 1 7 22.500L0.500 23.500 2 18A11.500 11.500 0 0 1 12 .5z" fill="#6e69ca" /><rect x="5" y="7.500" width="9.500" height="9" rx="1.500" fill="#fff" /><path d="M16 10.500l3-2v7l-3-2z" fill="#fff" /></Svg></Slot>
      <Slot><Svg w={24}><ellipse cx="12" cy="12" rx="11" ry="11.300" fill="#e81123" /><path d="M14 1A11.300 11.300 0 0 1 14 23c5-2 5-20 0-22z" fill="#ff6a63" /><ellipse cx="12" cy="12" rx="5" ry="8.500" fill="#27201f" /></Svg></Slot>
      <Slot><Svg w={24}><circle cx="12" cy="12" r="11.800" fill="#0f7fd2" /><path d="M1 9C3 1 14-3 21 4c5 6 2 12-5 11-3-.5-1-2-1-4C14 6 6 5 1 9z" fill="#37c0c8" /><path d="M14 1c8 1 12 9 8 13-3 2-8 1-7-1 3-6-1-9-6-10 1-1 3-2 5-2z" fill="#63d35a" /><path d="M10 10c-5 4 1 14 12 8-4 6-12 7-16 3-5-6-1-11 4-11z" fill="#0a4d94" /></Svg></Slot>
      <Slot run><Svg w={25} h={24}><path d="M.5 1.500h9l1.500 3H.5z" fill="#dd9a0c" /><path d="M.5 4h24v18.500H.5z" fill="#fcc83a" /><path d="M5 16c0-1 1-1.500 2-1.500h11c1 0 2 .5 2 1.500v6.500H5z" fill="#1272c8" /><path d="M8 18.500h9v2H8z" fill="#0b4c8e" /></Svg></Slot>
      <Slot><Svg w={24}><path d="M0 0h24v24H0z" fill="#29abd9" /><path d="M9 3h4.500v12.500H19V20H7z" fill="#fff" /><path d="M9 3L6 20h2z" fill="#12335e" /></Svg></Slot>
      <Slot><Svg w={24} h={23}><path d="M0 8l12-8 12 8v14H0z" fill="#1268b8" /><path d="M2 8h20v8H2z" fill="#f3f7fb" /><path d="M0 8l12 8L24 8v14H0z" fill="#36a8ee" /><path d="M0 22l12-8 12 8z" fill="#5fc4f8" opacity=".5" /></Svg></Slot>
      <Slot><Svg w={24}><path d="M0 0h24v24H0z" fill="#000" /><path d="M8 4h3l2 8V4h3v16h-3l-2-7v7H8z" fill="#d9131c" /></Svg></Slot>
      <Slot><Svg w={24}><circle cx="12" cy="12" r="11.800" fill="#f9c51d" /><path d="M1.500 6.500A11.800 11.800 0 0 1 22.500 6.500H12L7 14z" fill="#e5382c" /><path d="M1.500 6.500L7 15l5 3-1.500 5.800A11.800 11.800 0 0 1 1.500 6.500z" fill="#2fa24f" /><circle cx="12" cy="12" r="5.600" fill="#fff" /><circle cx="12" cy="12" r="4.400" fill="#3a7ff0" /></Svg></Slot>
      <Slot><Svg w={24}><rect width="24" height="24" rx="3" fill="#0e0e10" /><path d="M2 6V2h4M18 2h4v4M22 18v4h-4M6 22H2v-4" stroke="#c82030" strokeWidth="1.200" /><rect x="4" y="6.500" width="12" height="11" rx="2" fill="#e8213a" /><path d="M16 10l5-2v8l-5-2z" fill="#e8213a" /><circle cx="9" cy="12" r="2.600" stroke="#fff" strokeWidth="1.200" /><circle cx="13.500" cy="9" r="1" fill="#fff" /></Svg></Slot>
      <Slot><Svg w={24}><circle cx="12" cy="12" r="11.500" fill="#f8a523" /><path d="M10 .8A11.500 11.500 0 0 1 23 15C22 6 16 4 9 5z" fill="#7a54e8" /><path d="M.8 9A11.500 11.500 0 0 0 12 23.500c3 0 6-1 8-3C11 20 6 14 6 4 3 5 1.500 7 .8 9z" fill="#fdc83a" /><path d="M12 4.500l6.500 2.500c0 6-2 10-6.500 13-4.500-3-6.500-7-6.500-13z" fill="#fff" /><circle cx="12" cy="10" r="2" fill="#3a3c4c" /><path d="M11 10h2l1 5h-4z" fill="#3a3c4c" /></Svg></Slot>
      <Slot on><div className="flex h-6 w-6 items-center justify-center bg-[#fbe9e4]"><RedA w={17} h={20} /></div></Slot>
    </div>
    <Svg w={70} h={20} className="ml-[44px]">
      <path d="M.5 13l5.500-5.500L11.500 13" stroke="#f0f0f0" strokeWidth="1.400" />
      <path d="M26 14a4 4 0 0 1 0-7.500c1-4 7-4 8.500 0 4 .5 4 7.500 0 7.500z" fill="#9a9da0" /><circle cx="33.500" cy="13.500" r="5" fill="#1b83e0" stroke="#e8f3ff" strokeWidth=".8" /><path d="M31 13a2.500 2.500 0 0 1 4.500-1M36 14a2.500 2.500 0 0 1-4.500 1" stroke="#fff" />
      <path d="M47.500 8a6.500 6.500 0 0 1 12-1M60 3v4.500h-4.500M48 17v-5h5M48.500 12.500a6 6 0 0 0 4 4" stroke="#e8e8e8" strokeWidth="1.300" /><circle cx="58" cy="14.500" r="3.800" fill="#1787e8" />
    </Svg>
    <div className="ml-px flex w-[34px] flex-col items-center text-[11.500px] leading-[16px] tracking-[-0.3px]"><span>ENG</span><span>US</span></div>
    <Svg w={66} h={20} className="ml-[13px]">
      <g stroke="#f0f0f0" strokeWidth="1.300"><path d="M1 8.500c4-4.500 11-4.500 15 0M3.500 11c3-3 7-3 10 0M6 13.500c1.500-1.500 3.500-1.500 5 0" /></g><circle cx="8.500" cy="15.500" r="1.200" fill="#fff" />
      <path d="M25 8h2.500l3.500-3.500v11L27.500 12H25z" stroke="#f0f0f0" strokeWidth="1.100" /><path d="M33 7.500c1.500 1.500 1.500 3.500 0 5" stroke="#ddd" /><path d="M35 5.500c2.500 2.500 2.500 6.500 0 9M37 4c3 3.500 3 8.500 0 12" stroke="#777" />
      <path d="M54 6.500h9v8H52v-3" stroke="#f0f0f0" strokeWidth="1.300" /><path d="M64 9v3" stroke="#fff" strokeWidth="1.600" /><path d="M48 5.500h5v3l-2.500 1.500L48 8.500zM49 3v2.500M52 3v2.500M50.500 10v3" stroke="#f0f0f0" strokeWidth="1.100" />
    </Svg>
    <div className="ml-auto flex flex-col items-end text-[11.500px] leading-[16px] tracking-[-0.3px] whitespace-nowrap"><span>5:24 pm</span><span>16/12/2022</span></div>
    <div className="ml-[8px] mr-[20px] flex h-4 w-4 items-center justify-center rounded-full bg-[#c9c9c9] text-[10px] leading-none text-[#222]">3</div>
  </footer>
);

export default function App() {
  return (
    <div className={"relative h-[768px] w-[1366px] overflow-hidden bg-[#060505] " + UI}>
      <Defs />
      <DesktopTop />
      <main className="relative ml-3 mt-[18px] flex h-[695px] w-[1346px] flex-col overflow-hidden rounded-lg">
        <TitleBar />
        <MenuTabs />
        <Ribbon />
        <DocTabs />
        <Canvas />
        <BottomBar />
      </main>
      <Taskbar />
    </div>
  );
}
